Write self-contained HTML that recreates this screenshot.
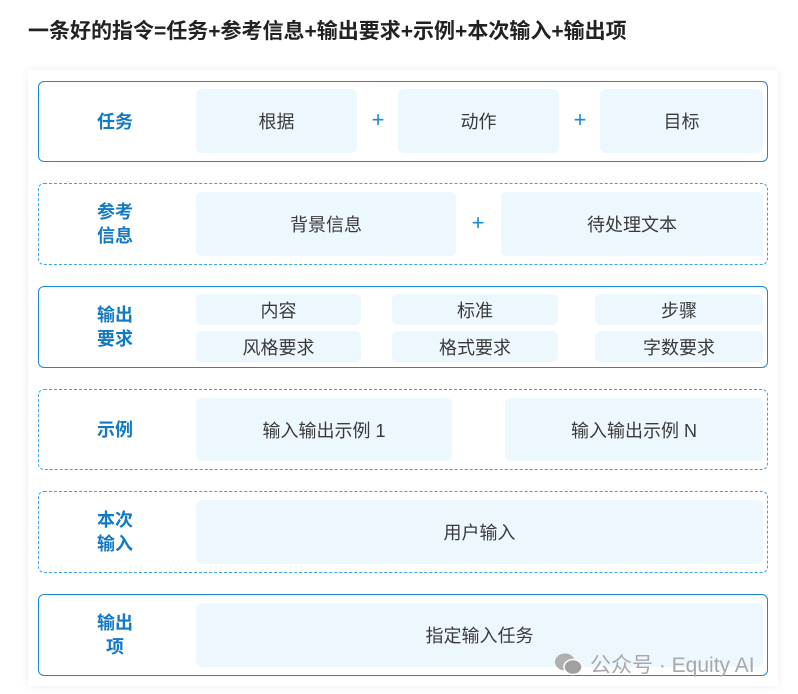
<!DOCTYPE html><html><head><meta charset="utf-8"><style>
body{margin:0;width:798px;height:694px;background:#fff;font-family:"Liberation Sans","Noto Sans CJK SC",sans-serif;position:relative;overflow:hidden}
.t{position:absolute;left:28px;top:15px;font-size:21px;font-weight:bold;color:#222;letter-spacing:0px}
.card{position:absolute;left:28px;top:70px;width:750px;height:616px;background:#fff;box-shadow:0 0 8px rgba(0,0,0,.08)}
.row{position:absolute;left:38px;width:730px;box-sizing:border-box;border:1.5px solid #1a8ad4;border-radius:6px}
.d{border:1.5px dashed #3aa3e6}
.lab{position:absolute;left:0;width:152px;top:0;bottom:0;display:flex;align-items:center;justify-content:center;text-align:center;color:#1479c4;font-weight:bold;font-size:18px;line-height:24px}
.c{position:absolute;background:#edf7fe;border-radius:6px;display:flex;align-items:center;justify-content:center;color:#3a3a3a;font-size:18px}
.p{position:absolute;color:#1a8ad4;font-size:22px;transform:translateX(-50%)}
.wm{position:absolute;left:554px;top:649px;color:#a8a8a8;font-size:21px;display:flex;align-items:center;gap:6px}
</style></head><body>
<div class="t">一条好的指令=任务+参考信息+输出要求+示例+本次输入+输出项</div>
<div class="card"></div>
<div class="row" style="top:81px;height:81px"><div class="lab">任务</div></div>
<div class="c" style="left:196px;top:89px;width:161px;height:64px">根据</div>
<div class="p" style="left:378px;top:107px">+</div>
<div class="c" style="left:398px;top:89px;width:161px;height:64px">动作</div>
<div class="p" style="left:580px;top:107px">+</div>
<div class="c" style="left:600px;top:89px;width:163px;height:64px">目标</div>

<div class="row d" style="top:183px;height:82px"><div class="lab">参考<br>信息</div></div>
<div class="c" style="left:196px;top:192px;width:260px;height:64px">背景信息</div>
<div class="p" style="left:478px;top:210px">+</div>
<div class="c" style="left:501px;top:192px;width:262px;height:64px">待处理文本</div>

<div class="row" style="top:286px;height:82px"><div class="lab">输出<br>要求</div></div>
<div class="c" style="left:196px;top:294px;width:165px;height:31px">内容</div>
<div class="c" style="left:392px;top:294px;width:166px;height:31px">标准</div>
<div class="c" style="left:595px;top:294px;width:168px;height:31px">步骤</div>
<div class="c" style="left:196px;top:331px;width:165px;height:31px">风格要求</div>
<div class="c" style="left:392px;top:331px;width:166px;height:31px">格式要求</div>
<div class="c" style="left:595px;top:331px;width:168px;height:31px">字数要求</div>

<div class="row d" style="top:389px;height:81px"><div class="lab">示例</div></div>
<div class="c" style="left:196px;top:398px;width:256px;height:63px">输入输出示例 1</div>
<div class="c" style="left:505px;top:398px;width:258px;height:63px">输入输出示例 N</div>

<div class="row d" style="top:491px;height:82px"><div class="lab">本次<br>输入</div></div>
<div class="c" style="left:196px;top:500px;width:567px;height:64px">用户输入</div>

<div class="row" style="top:594px;height:82px"><div class="lab">输出<br>项</div></div>
<div class="c" style="left:196px;top:603px;width:567px;height:64px">指定输入任务</div>
<div class="wm"><svg width="30" height="24" viewBox="0 0 30 24"><ellipse cx="11" cy="10" rx="10" ry="8.5" fill="#b0b0b0"/><ellipse cx="19" cy="15" rx="9" ry="7.5" fill="#a0a0a0" stroke="#fff" stroke-width="1.5"/></svg><span>公众号 · Equity AI</span></div>
</body></html>
